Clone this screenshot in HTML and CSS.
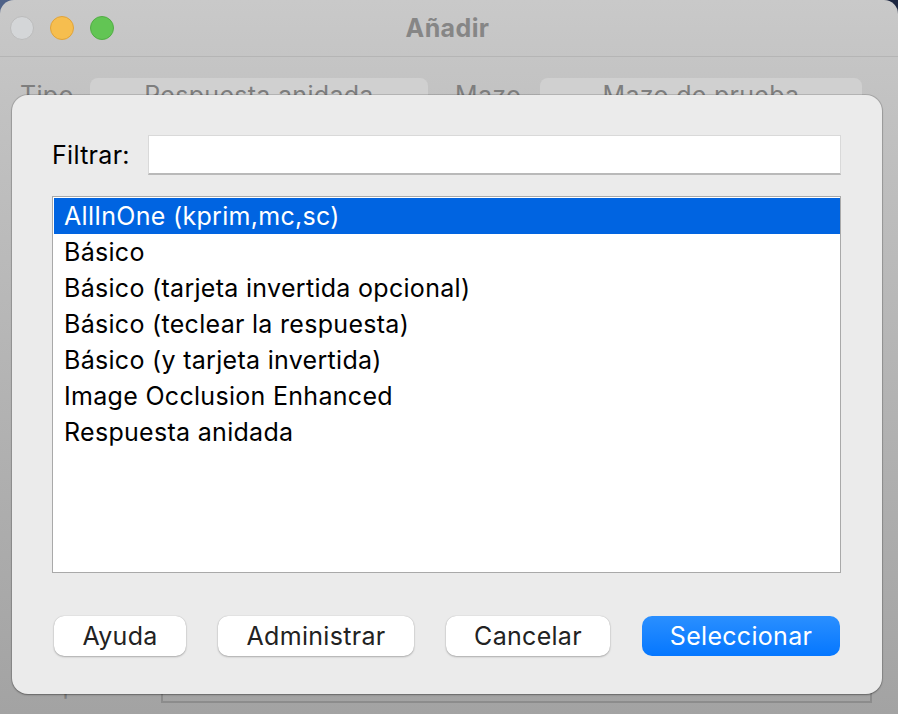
FILE: index.html
```html
<!DOCTYPE html>
<html>
<head>
  <title>Añadir</title>
  <link rel="stylesheet" href="styles.css">
</head>
<body>

<div class="window">
  <div class="titlebar">
    <div class="lights">
      <span class="light light-close"></span>
      <span class="light light-min"></span>
      <span class="light light-max"></span>
    </div>
    <h1 class="title">Añadir</h1>
  </div>

  <div class="back-row">
    <span class="back-label back-type-label">Tipo</span>
    <span class="back-button back-type">Respuesta anidada</span>
    <span class="back-label back-deck-label">Mazo</span>
    <span class="back-button back-deck">Mazo de prueba</span>
  </div>

  <div class="back-fields">
    <span class="back-label back-tags-label">Etiquetas</span>
    <div class="back-box"></div>
  </div>

  <div class="dialog">
    <div class="filter-row">
      <label class="filter-label" for="filter">Filtrar:</label>
      <input class="filter-input" type="text" id="filter">
    </div>

    <ul class="note-list">
      <li class="selected">AllInOne (kprim,mc,sc)</li>
      <li>Básico</li>
      <li>Básico (tarjeta invertida opcional)</li>
      <li>Básico (teclear la respuesta)</li>
      <li>Básico (y tarjeta invertida)</li>
      <li>Image Occlusion Enhanced</li>
      <li>Respuesta anidada</li>
    </ul>

    <div class="actions">
      <button class="btn btn-help">Ayuda</button>
      <button class="btn btn-manage">Administrar</button>
      <button class="btn btn-cancel">Cancelar</button>
      <button class="btn btn-primary">Seleccionar</button>
    </div>
  </div>
</div>

</body>
</html>
```
FILE: styles.css
```css
html, body {
  margin: 0;
  height: 100%;
}
body {
  font-family: Inter, "Liberation Sans", sans-serif;
  font-size: 25px;
  letter-spacing: 0.3px;
  background: linear-gradient(90deg, #4f6288, #1c2640);
  overflow: hidden;
}
.window {
  position: relative;
  width: 898px;
  height: 714px;
  overflow: hidden;
  border-radius: 14px 14px 0 0;
  background: linear-gradient(180deg, #c9c9c9 0, #c2c2c2 100px, #a3a3a3 100%);
}
.titlebar {
  display: flex;
  align-items: center;
  justify-content: center;
  height: 56px;
  border-bottom: 1px solid #b5b5b5;
  position: relative;
}
.lights {
  position: absolute;
  left: 10px;
  top: 16px;
  display: flex;
  gap: 16px;
}
.light {
  width: 24px;
  height: 24px;
  border-radius: 50%;
  box-sizing: border-box;
  border: 1px solid;
}
.light-close {
  background: #d4d6d8;
  border-color: #bcbcbc;
}
.light-min {
  background: #f6be4f;
  border-color: #e0a33a;
}
.light-max {
  background: #62c554;
  border-color: #52ad45;
}
.title {
  margin: 0 3px 0 0;
  font-size: 25px;
  font-weight: 700;
  letter-spacing: 0.4px;
  color: #868686;
}
.back-row {
  display: flex;
  align-items: flex-start;
  padding: 21px 0 0 20px;
  height: 60px;
  box-sizing: border-box;
  color: #7e7e7e;
}
.back-label {
  line-height: 34px;
  color: #7e7e7e;
}
.back-type-label {
  width: 70px;
}
.back-button {
  height: 40px;
  line-height: 34px;
  text-align: center;
  background: #d0d0d0;
  border-radius: 8px;
  box-sizing: border-box;
}
.back-type {
  width: 338px;
}
.back-deck-label {
  width: 85px;
  margin-left: 27px;
}
.back-deck {
  width: 322px;
}
.back-fields {
  display: flex;
  padding: 520px 0 0 23px;
}
.back-tags-label {
  width: 138px;
  margin-top: 31px;
}
.back-box {
  width: 711px;
  height: 66px;
  box-sizing: border-box;
  border: 2px solid #8c8c8c;
}
.dialog {
  position: absolute;
  left: 12px;
  top: 95px;
  width: 870px;
  height: 599px;
  box-sizing: border-box;
  padding: 40px 41px 0 40px;
  background: #ebebeb;
  border-radius: 16px;
  box-shadow: 0 0 0 1px rgba(0, 0, 0, 0.12), 0 1px 2px rgba(0, 0, 0, 0.3);
  color: #000;
}
.filter-row {
  display: flex;
  align-items: center;
  height: 40px;
}
.filter-label {
  width: 96px;
}
.filter-input {
  flex: 1;
  height: 40px;
  box-sizing: border-box;
  border: 1px solid #d9d9d9;
  border-bottom: 2px solid #b9b9b9;
  background: #fff;
  outline: none;
}
.note-list {
  list-style: none;
  margin: 21px 0 0;
  padding: 1px 0 1px 1px;
  height: 377px;
  box-sizing: border-box;
  border: 1px solid #a9a9a9;
  background: #fff;
}
.note-list li {
  height: 36px;
  line-height: 36px;
  padding-left: 10px;
}
.note-list .selected {
  background: #0064e1;
  color: #fff;
}
.actions {
  display: flex;
  gap: 32px;
  margin-top: 43px;
  padding: 0 1px 0 2px;
}
.btn {
  height: 40px;
  padding: 0;
  font-family: inherit;
  font-size: 25px;
  letter-spacing: 0.3px;
  color: #222;
  background: #fff;
  border: none;
  border-radius: 10px;
  box-shadow: 0 0 1px rgba(0, 0, 0, 0.25), 0 1px 2px rgba(0, 0, 0, 0.25);
}
.btn-help {
  width: 132px;
}
.btn-manage {
  width: 196px;
}
.btn-cancel {
  width: 164px;
}
.btn-primary {
  width: 198px;
  color: #fff;
  background: linear-gradient(180deg, #2a8fff, #0577ff);
  box-shadow: none;
}
```
